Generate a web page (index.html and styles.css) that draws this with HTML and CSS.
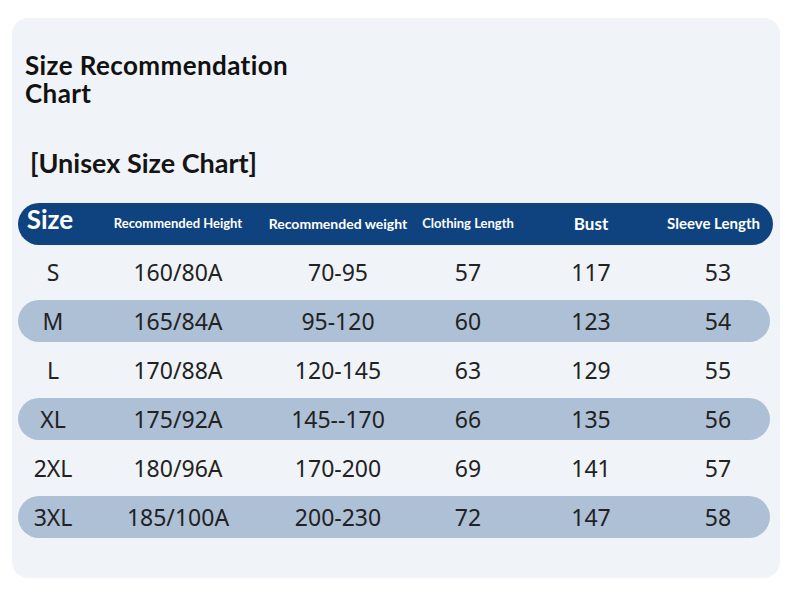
FILE: index.html
```html
<!DOCTYPE html>
<html lang="en">
<head>
<meta charset="utf-8">
<title>Size Recommendation Chart</title>
<link rel="stylesheet" href="styles.css">
</head>
<body>
<div class="card">
  <h1 class="title">Size Recommendation<br>Chart</h1>
  <h2 class="subtitle">[Unisex Size Chart]</h2>
  <div class="table">
    <div class="row head">
      <div class="cell size-h">Size</div>
      <div class="cell">Recommended Height</div>
      <div class="cell weight-h">Recommended weight</div>
      <div class="cell">Clothing Length</div>
      <div class="cell bust">Bust</div>
      <div class="cell sleeve-h">Sleeve Length</div>
    </div>
    <div class="row">
      <div class="cell">S</div><div class="cell">160/80A</div><div class="cell">70-95</div><div class="cell">57</div><div class="cell">117</div><div class="cell last">53</div>
    </div>
    <div class="row alt">
      <div class="cell">M</div><div class="cell">165/84A</div><div class="cell">95-120</div><div class="cell">60</div><div class="cell">123</div><div class="cell last">54</div>
    </div>
    <div class="row">
      <div class="cell">L</div><div class="cell">170/88A</div><div class="cell">120-145</div><div class="cell">63</div><div class="cell">129</div><div class="cell last">55</div>
    </div>
    <div class="row alt">
      <div class="cell">XL</div><div class="cell">175/92A</div><div class="cell">145--170</div><div class="cell">66</div><div class="cell">135</div><div class="cell last">56</div>
    </div>
    <div class="row">
      <div class="cell">2XL</div><div class="cell">180/96A</div><div class="cell">170-200</div><div class="cell">69</div><div class="cell">141</div><div class="cell last">57</div>
    </div>
    <div class="row alt">
      <div class="cell">3XL</div><div class="cell">185/100A</div><div class="cell">200-230</div><div class="cell">72</div><div class="cell">147</div><div class="cell last">58</div>
    </div>
  </div>
</div>
</body>
</html>
```
FILE: styles.css
```css
* { box-sizing: border-box; }
html, body { margin: 0; padding: 0; background: #ffffff; }
body { width: 790px; height: 591px; overflow: hidden; }

.card {
  margin: 18px 0 0 12px;
  width: 768px;
  height: 560px;
  border-radius: 16px;
  background: #f0f4f8;
  padding: 33px 0 0 6px;
}

.title {
  margin: 0 0 0 7px;
  font-family: Lato, "Liberation Sans", sans-serif;
  font-weight: 700;
  font-size: 26px;
  letter-spacing: 0.4px;
  font-variant-ligatures: none;
  line-height: 28px;
  color: #111111;
}

.subtitle {
  margin: 40px 0 0 12px;
  font-family: Lato, "Liberation Sans", sans-serif;
  font-weight: 700;
  font-size: 27px;
  line-height: 32px;
  color: #151515;
}

.table {
  margin-top: 24px;
  display: flex;
  flex-direction: column;
  gap: 7px;
}

.row {
  display: grid;
  grid-template-columns: 70px 180px 140px 120px 126px 119px;
  height: 42px;
  align-items: center;
  width: 752px;
  font-family: "Noto Sans", "Open Sans", sans-serif;
  font-size: 23px;
  color: #222222;
  border-radius: 21px;
}

.row.alt { background: #adc0d5; }

.row.head {
  width: 755px;
  background: #0f437f;
  color: #ffffff;
  font-family: Lato, "Liberation Sans", sans-serif;
  font-weight: 700;
  font-size: 13px;
  margin-bottom: -1px;
}

.cell {
  text-align: center;
  white-space: nowrap;
}

.row.head .cell { padding-bottom: 4px; }
.row.head .size-h { font-size: 26px; padding-bottom: 12px; padding-right: 6px; }
.row.head .weight-h { font-size: 14px; }
.row.head .bust { font-size: 17px; }
.row.head .sleeve-h { font-size: 15px; }
.cell.last { padding-left: 9px; }
```
